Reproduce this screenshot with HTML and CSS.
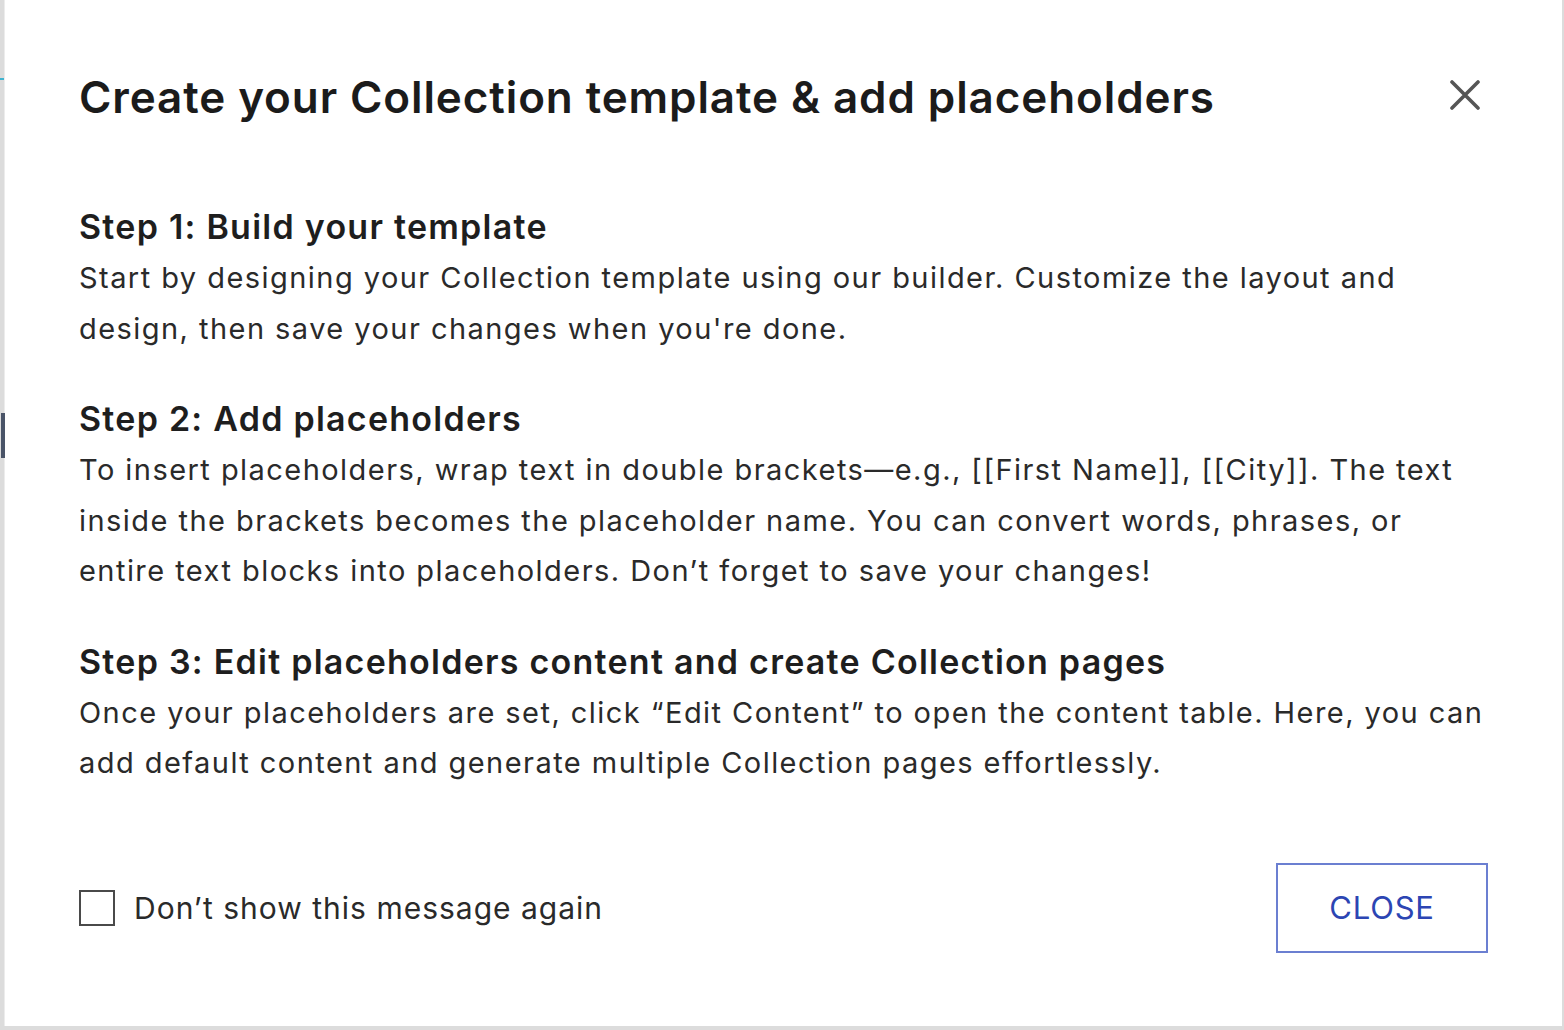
FILE: index.html
```html
<!DOCTYPE html>
<html lang="en">
<head>
<meta charset="utf-8">
<title>Create your Collection template</title>
<link rel="stylesheet" href="styles.css">
</head>
<body>
<div class="backdrop">
  <span class="edge-tick"></span>
  <span class="edge-bar"></span>
  <div class="dialog" role="dialog">
    <header class="dialog-head">
      <h1 class="dialog-title">Create your Collection template &amp; add placeholders</h1>
      <button class="icon-close" aria-label="Close">
        <svg viewBox="0 0 30 30" width="30" height="30"><path d="M2 2 L28 28 M28 2 L2 28" stroke="#555" stroke-width="3.6" stroke-linecap="round" fill="none"/></svg>
      </button>
    </header>
    <div class="steps">
      <section class="step">
        <h2 class="step-title">Step 1: Build your template</h2>
        <p class="step-text">Start by designing your Collection template using our builder. Customize the layout and design, then save your changes when you're done.</p>
      </section>
      <section class="step">
        <h2 class="step-title">Step 2: Add placeholders</h2>
        <p class="step-text">To insert placeholders, wrap text in double brackets—e.g., [[First Name]], [[City]]. The text inside the brackets becomes the placeholder name. You can convert words, phrases, or entire text blocks into placeholders. Don’t forget to save your changes!</p>
      </section>
      <section class="step">
        <h2 class="step-title">Step 3: Edit placeholders content and create Collection pages</h2>
        <p class="step-text">Once your placeholders are set, click “Edit Content” to open the content table. Here, you can add default content and generate multiple Collection pages effortlessly.</p>
      </section>
    </div>
    <footer class="dialog-foot">
      <label class="check">
        <span class="check-box"></span>
        <span class="check-label">Don’t show this message again</span>
      </label>
      <button class="btn-close">CLOSE</button>
    </footer>
  </div>
</div>
</body>
</html>
```
FILE: styles.css
```css
html, body {
  margin: 0;
  padding: 0;
}
body {
  background: #dcdcdc;
  font-family: Inter, "Noto Sans", sans-serif;
  width: 1564px;
  height: 1030px;
  overflow: hidden;
}
.backdrop {
  position: relative;
  height: 1030px;
  padding-left: 4px;
  box-sizing: border-box;
}
.edge-tick {
  position: absolute;
  left: 0;
  top: 78px;
  width: 4px;
  height: 2px;
  background: #3fb3cf;
}
.edge-bar {
  position: absolute;
  left: 1px;
  top: 413px;
  width: 4px;
  height: 45px;
  background: #4a5468;
}
.dialog {
  width: 1558px;
  height: 1026px;
  background: #fff;
  border-left: 1px solid #ececec;
  box-sizing: border-box;
  padding: 71px 74px 0 74px;
  display: flex;
  flex-direction: column;
}
.dialog-head {
  display: flex;
  justify-content: space-between;
  align-items: flex-start;
}
.dialog-title {
  margin: 0;
  font-size: 44px;
  line-height: 53px;
  font-weight: 600;
  color: #1b1b1b;
  letter-spacing: 0.9px;
}
.icon-close {
  margin: 4px 3px 0 0;
  width: 40px;
  height: 40px;
  padding: 5px;
  border: 0;
  background: none;
  display: flex;
}
.steps {
  margin: 77px -4px 0 0;
  display: flex;
  flex-direction: column;
  gap: 39px;
}
.step-title {
  margin: 0;
  font-size: 34px;
  line-height: 52px;
  font-weight: 600;
  color: #1e1e1e;
  letter-spacing: 1.25px;
}
.step-text {
  margin: 0;
  font-size: 29px;
  line-height: 50.5px;
  color: #2a2a2a;
  letter-spacing: 1.45px;
}
.dialog-foot {
  margin-top: 74px;
  display: flex;
  justify-content: space-between;
  align-items: center;
}
.check {
  display: flex;
  align-items: center;
  gap: 19px;
}
.check-box {
  width: 32px;
  height: 32px;
  border: 2px solid #4a4a4a;
  background: #fff;
}
.check-label {
  font-size: 30px;
  color: #2a2a2a;
  letter-spacing: 1px;
}
.btn-close {
  width: 212px;
  height: 90px;
  border: 2px solid #6b7fd1;
  background: #fff;
  color: #2c45b3;
  font-family: Inter, "Noto Sans", sans-serif;
  font-size: 31px;
  letter-spacing: 0.8px;
}
```
